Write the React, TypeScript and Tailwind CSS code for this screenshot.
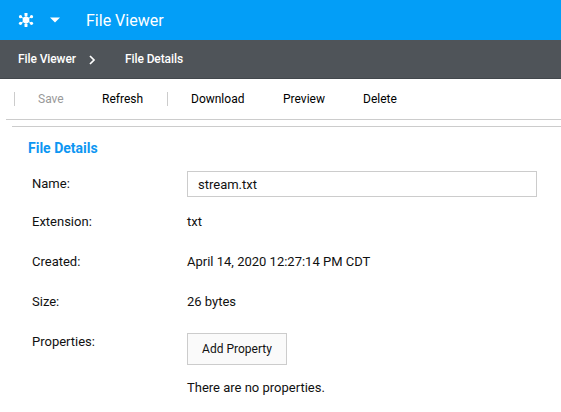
import type { ReactNode } from "react";

function HubIcon() {
  return (
    <svg width="16" height="16" viewBox="0 0 16 16" className="shrink-0" aria-hidden="true">
      <g stroke="#fff" strokeWidth="1">
        <path d="M8 2V14M2.6 4.7L13.4 11.3M13.4 4.7L2.6 11.3" />
      </g>
      <g fill="#fff">
        <circle cx="8" cy="8" r="3.4" />
        <rect x="6.5" y="1" width="3" height="3" rx="0.4" />
        <rect x="6.5" y="12" width="3" height="3" rx="0.4" />
        <circle cx="2.5" cy="4.7" r="1.6" />
        <circle cx="13.5" cy="4.7" r="1.6" />
        <circle cx="2.5" cy="11.3" r="1.6" />
        <circle cx="13.5" cy="11.3" r="1.6" />
      </g>
    </svg>
  );
}

function Row({ label, className, children }: { label: string; className: string; children: ReactNode }) {
  return (
    <div className={`flex items-start ${className}`}>
      <div className="w-[155px] shrink-0">{label}</div>
      <div>{children}</div>
    </div>
  );
}

export default function App() {
  return (
    <div className="h-[412px] w-[561px] overflow-hidden bg-white font-['Roboto',sans-serif] text-[13px] leading-5 text-[#111]">
      <header className="flex h-10 items-center bg-[#039ef7] pl-[18px] text-white">
        <HubIcon />
        <svg width="10" height="6" viewBox="0 0 10 6" className="ml-4 shrink-0" aria-hidden="true">
          <path d="M0 0.5H10L5 5.5Z" fill="#fff" />
        </svg>
        <h1 className="ml-[26px] pt-0.5 text-[16px] leading-5">File Viewer</h1>
      </header>

      <nav className="flex h-[39px] items-center border-b border-[#42474c] bg-[#4f5459] pl-[18px] text-[12px] font-medium tracking-[-0.1px] text-white">
        <span className="w-[71px]">File Viewer</span>
        <svg width="7" height="10" viewBox="0 0 7 10" className="mt-0.5 shrink-0" aria-hidden="true">
          <path d="M1 1L5 5L1 9" fill="none" stroke="#fff" strokeWidth="1.7" />
        </svg>
        <span className="ml-[29px]">File Details</span>
      </nav>

      <div className="ml-1.5 flex h-[41px] items-center border-b border-[#ccc] text-[12px] text-black">
        <div className="ml-2 h-3.5 w-px bg-[#ccc]" />
        <button className="ml-[23px] w-16 text-left text-[#999]">Save</button>
        <button className="w-[65px] text-left">Refresh</button>
        <div className="h-3.5 w-px bg-[#ccc]" />
        <button className="ml-[23px] w-[92px] text-left">Download</button>
        <button className="w-20 text-left">Preview</button>
        <button className="text-left">Delete</button>
      </div>

      <main className="ml-3 mt-1.5 border-t border-[#ccc] pt-[11px]">
        <h2 className="ml-4 text-[14px] font-bold leading-5 text-[#0d96f2]">File Details</h2>
        <div className="ml-5">
          <Row label="Name:" className="mt-[13px] h-[41px] pt-[3px]">
            <input
              defaultValue="stream.txt"
              className="-mt-[3px] block h-[26px] w-[350px] border border-[#ccc] bg-white px-2.5 pt-px outline-none"
            />
          </Row>
          <Row label="Extension:" className="h-10">txt</Row>
          <Row label="Created:" className="h-10">April 14, 2020 12:27:14 PM CDT</Row>
          <Row label="Size:" className="h-10">26 bytes</Row>
          <Row label="Properties:" className="">
            <button className="mt-[1px] block h-8 w-[100px] border border-[#ccc] bg-[#fafafa] text-[12px]">
              Add Property
            </button>
            <p className="mt-[13px]">There are no properties.</p>
          </Row>
        </div>
      </main>
    </div>
  );
}
